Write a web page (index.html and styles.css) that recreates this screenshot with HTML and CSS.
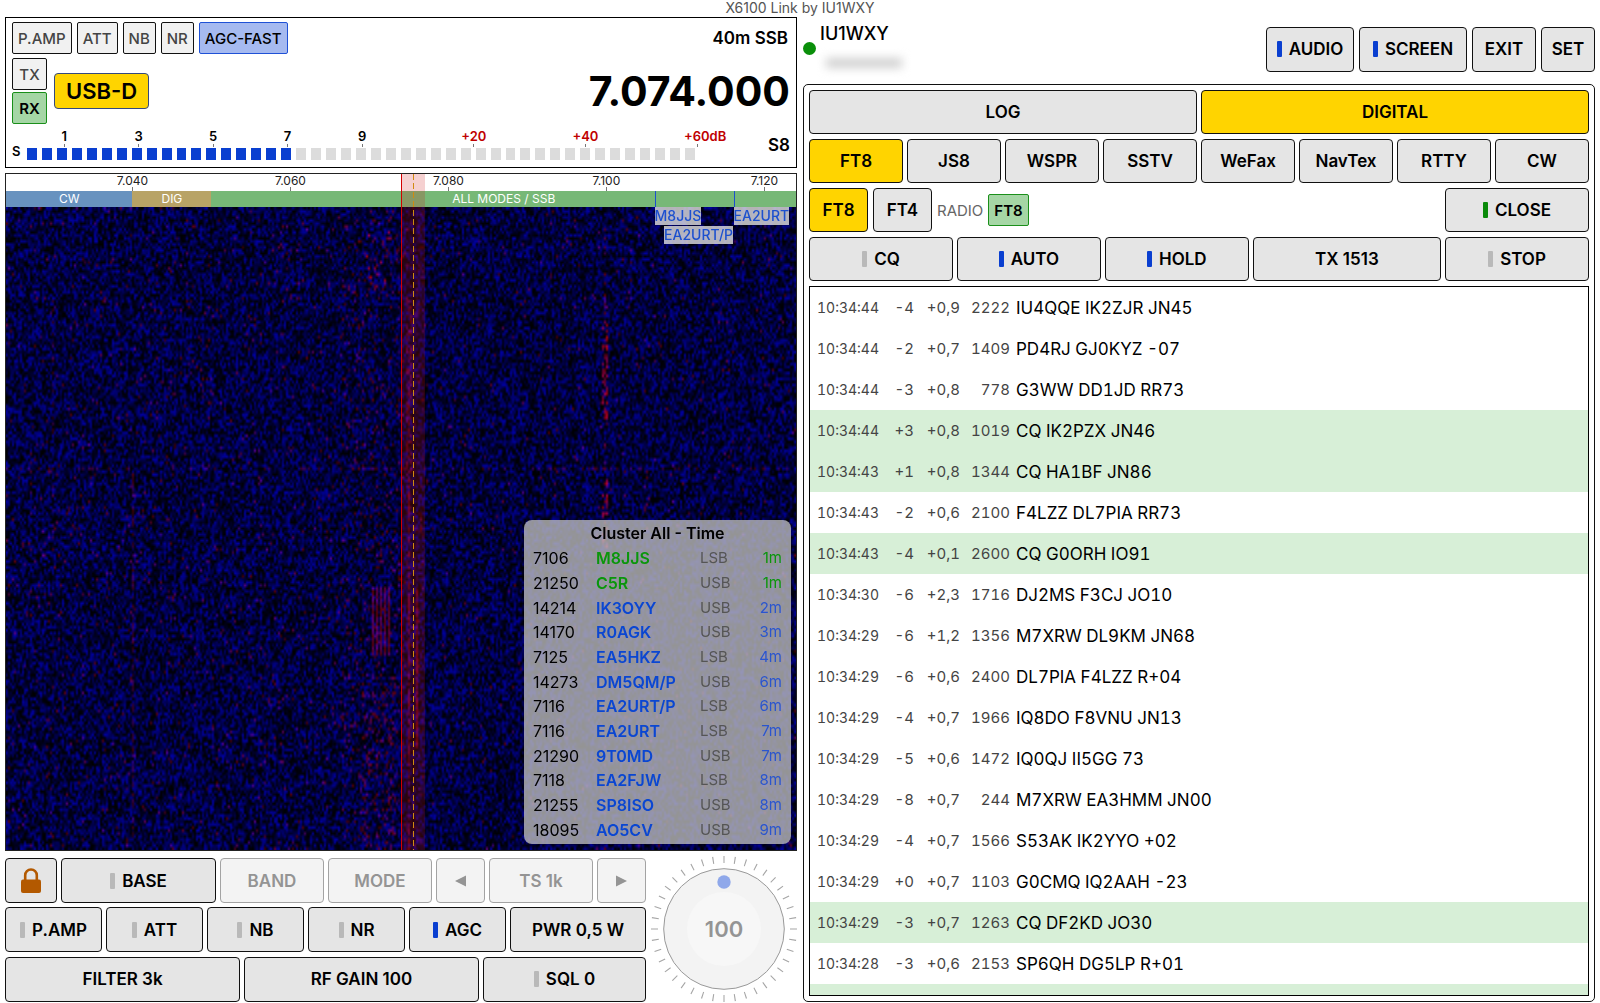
FILE: index.html
```html
<!DOCTYPE html>
<html lang="en">
<head>
<meta charset="utf-8">
<meta name="viewport" content="width=device-width, initial-scale=1">
<title>X6100 Link by IU1WXY</title>
<link rel="stylesheet" href="styles.css">
</head>
<body>
<header class="app-title">X6100 Link by IU1WXY</header>
<main class="app">
  <section class="radio">
    <div class="display">
      <div class="display-top">
        <div class="tags">
          <span class="tag">P.AMP</span><span class="tag">ATT</span><span class="tag">NB</span><span class="tag">NR</span><span class="tag tag-blue">AGC-FAST</span>
        </div>
        <span class="band">40m SSB</span>
      </div>
      <div class="display-mid">
        <div class="txrx"><span class="tag">TX</span><span class="tag tag-green">RX</span></div>
        <span class="mode">USB-D</span>
        <span class="freq">7.074.000</span>
      </div>
      <div class="smeter">
        <span class="s-name">S</span>
        <div class="s-body">
          <div class="s-scale">
            <span>1</span><span>3</span><span>5</span><span>7</span><span>9</span><i></i><span class="over">+20</span><span class="over">+40</span><span class="over last">+60dB</span>
          </div>
          <div class="s-bar" data-total="45" data-level="18"></div>
        </div>
        <span class="s-value">S8</span>
      </div>
    </div>

    <div class="spectrum">
      <div class="ruler">
        <span style="left:16%">7.040</span><span style="left:36%">7.060</span><span style="left:56%">7.080</span><span style="left:76%">7.100</span><span style="left:96%">7.120</span>
      </div>
      <div class="plan"><span class="plan-cw">CW</span><span class="plan-dig">DIG</span><span class="plan-all">ALL MODES / SSB</span></div>
      <div class="waterfall"><canvas id="waterfall" width="395" height="215"></canvas></div>
      <div class="passband"></div>
      <i class="spot-line" style="left:82.1%"></i><i class="spot-line" style="left:92.1%"></i>
      <a href="#" class="spot" style="left:82.1%">M8JJS</a>
      <a href="#" class="spot" style="left:92.1%">EA2URT</a>
      <a href="#" class="spot spot-low" style="left:83.3%">EA2URT/P</a>
      <table class="cluster">
        <caption>Cluster All - Time</caption>
        <tbody>
          <tr class="fresh"><td>7106</td><td>M8JJS</td><td>LSB</td><td>1m</td></tr>
          <tr class="fresh"><td>21250</td><td>C5R</td><td>USB</td><td>1m</td></tr>
          <tr><td>14214</td><td>IK3OYY</td><td>USB</td><td>2m</td></tr>
          <tr><td>14170</td><td>R0AGK</td><td>USB</td><td>3m</td></tr>
          <tr><td>7125</td><td>EA5HKZ</td><td>LSB</td><td>4m</td></tr>
          <tr><td>14273</td><td>DM5QM/P</td><td>USB</td><td>6m</td></tr>
          <tr><td>7116</td><td>EA2URT/P</td><td>LSB</td><td>6m</td></tr>
          <tr><td>7116</td><td>EA2URT</td><td>LSB</td><td>7m</td></tr>
          <tr><td>21290</td><td>9T0MD</td><td>USB</td><td>7m</td></tr>
          <tr><td>7118</td><td>EA2FJW</td><td>LSB</td><td>8m</td></tr>
          <tr><td>21255</td><td>SP8ISO</td><td>USB</td><td>8m</td></tr>
          <tr><td>18095</td><td>AO5CV</td><td>USB</td><td>9m</td></tr>
        </tbody>
      </table>
    </div>

    <div class="controls">
      <div class="pad">
        <div class="row row-a">
          <button aria-label="Lock"><svg class="lock" viewBox="0 0 20 26" width="20" height="26"><path d="M4.2 12V7.3a5.8 5.8 0 0 1 11.6 0V12" fill="none" stroke="#b35900" stroke-width="2.6"/><rect x="0" y="11.5" width="20" height="13.5" rx="2" fill="#b35900"/></svg></button>
          <button><i class="led"></i>BASE</button>
          <button disabled>BAND</button>
          <button disabled>MODE</button>
          <button disabled aria-label="Step down"><svg viewBox="0 0 11 12" width="11" height="12"><path d="M0 6 11 .5v11z" fill="currentColor"/></svg></button>
          <button disabled>TS 1k</button>
          <button disabled aria-label="Step up"><svg viewBox="0 0 11 12" width="11" height="12"><path d="M11 6 0 .5v11z" fill="currentColor"/></svg></button>
        </div>
        <div class="row row-b">
          <button><i class="led"></i>P.AMP</button>
          <button><i class="led"></i>ATT</button>
          <button><i class="led"></i>NB</button>
          <button><i class="led"></i>NR</button>
          <button><i class="led on"></i>AGC</button>
          <button>PWR 0,5 W</button>
        </div>
        <div class="row row-c">
          <button>FILTER 3k</button>
          <button>RF GAIN 100</button>
          <button><i class="led"></i>SQL 0</button>
        </div>
      </div>
      <div class="knob">
        <svg viewBox="0 0 148 148" width="148" height="148" aria-hidden="true">
          <circle cx="74" cy="74" r="69.5" fill="none" stroke="#a6a6a6" stroke-width="7" pathLength="400" stroke-dasharray="1 9" stroke-dashoffset=".5"/>
          <circle cx="74" cy="74" r="60.3" fill="#f3f3f3" stroke="#999" stroke-width="1"/>
          <circle cx="74" cy="74" r="37" fill="#f7f7f7"/>
          <circle cx="74" cy="27" r="6.7" fill="#8fa8ea"/>
        </svg>
        <span class="knob-value">100</span>
      </div>
    </div>
  </section>

  <section class="side">
    <div class="station">
      <i class="online"></i>
      <div class="who"><span class="call">IU1WXY</span><span class="address"></span></div>
      <div class="actions">
        <button class="w-audio"><i class="led on"></i>AUDIO</button>
        <button class="w-screen"><i class="led on"></i>SCREEN</button>
        <button class="w-exit">EXIT</button>
        <button class="w-set">SET</button>
      </div>
    </div>
    <div class="digital">
      <div class="row row-2"><button>LOG</button><button class="active">DIGITAL</button></div>
      <div class="row row-8"><button class="active">FT8</button><button>JS8</button><button>WSPR</button><button>SSTV</button><button>WeFax</button><button>NavTex</button><button>RTTY</button><button>CW</button></div>
      <div class="row submode">
        <button class="active">FT8</button><button>FT4</button>
        <span class="hint">RADIO</span><span class="tag tag-green">FT8</span>
        <button class="close"><i class="led ok"></i>CLOSE</button>
      </div>
      <div class="row row-5"><button><i class="led"></i>CQ</button><button><i class="led on"></i>AUTO</button><button><i class="led on"></i>HOLD</button><button>TX 1513</button><button><i class="led"></i>STOP</button></div>
      <div class="log">
        <table class="messages">
          <tbody>
            <tr><td>10:34:44</td><td>-4</td><td>+0,9</td><td>2222</td><td>IU4QQE IK2ZJR JN45</td></tr>
            <tr><td>10:34:44</td><td>-2</td><td>+0,7</td><td>1409</td><td>PD4RJ GJ0KYZ -07</td></tr>
            <tr><td>10:34:44</td><td>-3</td><td>+0,8</td><td>778</td><td>G3WW DD1JD RR73</td></tr>
            <tr class="cq"><td>10:34:44</td><td>+3</td><td>+0,8</td><td>1019</td><td>CQ IK2PZX JN46</td></tr>
            <tr class="cq"><td>10:34:43</td><td>+1</td><td>+0,8</td><td>1344</td><td>CQ HA1BF JN86</td></tr>
            <tr><td>10:34:43</td><td>-2</td><td>+0,6</td><td>2100</td><td>F4LZZ DL7PIA RR73</td></tr>
            <tr class="cq"><td>10:34:43</td><td>-4</td><td>+0,1</td><td>2600</td><td>CQ G0ORH IO91</td></tr>
            <tr><td>10:34:30</td><td>-6</td><td>+2,3</td><td>1716</td><td>DJ2MS F3CJ JO10</td></tr>
            <tr><td>10:34:29</td><td>-6</td><td>+1,2</td><td>1356</td><td>M7XRW DL9KM JN68</td></tr>
            <tr><td>10:34:29</td><td>-6</td><td>+0,6</td><td>2400</td><td>DL7PIA F4LZZ R+04</td></tr>
            <tr><td>10:34:29</td><td>-4</td><td>+0,7</td><td>1966</td><td>IQ8DO F8VNU JN13</td></tr>
            <tr><td>10:34:29</td><td>-5</td><td>+0,6</td><td>1472</td><td>IQ0QJ II5GG 73</td></tr>
            <tr><td>10:34:29</td><td>-8</td><td>+0,7</td><td>244</td><td>M7XRW EA3HMM JN00</td></tr>
            <tr><td>10:34:29</td><td>-4</td><td>+0,7</td><td>1566</td><td>S53AK IK2YYO +02</td></tr>
            <tr><td>10:34:29</td><td>+0</td><td>+0,7</td><td>1103</td><td>G0CMQ IQ2AAH -23</td></tr>
            <tr class="cq"><td>10:34:29</td><td>-3</td><td>+0,7</td><td>1263</td><td>CQ DF2KD JO30</td></tr>
            <tr><td>10:34:28</td><td>-3</td><td>+0,6</td><td>2153</td><td>SP6QH DG5LP R+01</td></tr>
            <tr class="cq"><td></td><td></td><td></td><td></td><td></td></tr>
          </tbody>
        </table>
      </div>
    </div>
  </section>
</main>
<script src="app.js"></script>
</body>
</html>
```
FILE: styles.css
```css
* { box-sizing: border-box; }

body {
  margin: 0;
  height: 100vh;
  padding: 0 5px 1px;
  display: flex;
  flex-direction: column;
  background: #fff;
  color: #000;
  font-family: Inter, "Noto Sans", sans-serif;
  font-size: 16px;
}

.app-title {
  height: 17px;
  line-height: 16px;
  font-size: 14px;
  color: #555;
  text-align: center;
  flex: none;
}

.app {
  flex: 1;
  min-height: 0;
  display: grid;
  grid-template-columns: minmax(0, 1fr) minmax(0, 1fr);
  gap: 6px;
}

/* Buttons and tags */
button {
  min-width: 0;
  height: 45px;
  padding: 0;
  display: flex;
  align-items: center;
  justify-content: center;
  border: 1px solid #111;
  border-radius: 4px;
  background: #e5e5e5;
  color: #000;
  font: 600 17px Inter, "Noto Sans", sans-serif;
  white-space: nowrap;
}
button.active { background: #ffd400; }
button:disabled { background: #f3f3f3; border-color: #a3a3a3; color: #949494; }

.led { width: 5px; height: 16px; margin-right: 7px; border-radius: 1px; background: #b9b9b9; }
.led.on { background: #0a3fd0; }
.led.ok { background: #0a8a0a; }

.tag {
  height: 32px;
  padding: 0 5px;
  display: flex;
  align-items: center;
  justify-content: center;
  border: 1px solid #111;
  border-radius: 2px;
  background: #f1f1f1;
  color: #444;
  font-size: 15px;
  font-weight: 500;
}
.tag-blue { background: #a6baf0; border-color: #1f51d6; color: #000; }
.tag-green { background: #a5d6a5; border-color: #1a8f1a; color: #000; font-weight: 600; }

/* Left half */
.radio { display: flex; flex-direction: column; min-height: 0; }

.display {
  height: 151px;
  flex: none;
  padding: 4px 6px 0;
  border: 1px solid #000;
  display: flex;
  flex-direction: column;
}
.display-top { display: flex; justify-content: space-between; }
.tags { display: flex; gap: 5px; }
.band { padding-right: 2px; line-height: 32px; font-size: 17px; font-weight: 600; }
.display-mid { margin-top: 4px; display: flex; align-items: center; }
.txrx { width: 35px; display: flex; flex-direction: column; gap: 2px; }
.mode {
  height: 36px;
  margin-left: 7px;
  padding: 0 11px;
  border: 1px solid #34497f;
  border-radius: 4px;
  background: #ffd400;
  font-size: 22px;
  font-weight: 600;
  line-height: 34px;
}
.freq { margin-left: auto; font-size: 41px; font-weight: 700; line-height: 50px; }

.smeter { display: flex; }
.s-name { width: 15px; padding-top: 17px; font-size: 13px; font-weight: 600; line-height: 20px; }
.s-body { flex: 1; padding-top: 4px; }
.s-scale { display: grid; grid-template-columns: repeat(5, 20fr) 5fr repeat(3, 30fr); height: 19px; }
.s-scale span {
  font-size: 13px;
  font-weight: 600;
  line-height: 16px;
  text-align: center;
  background: linear-gradient(#777, #777) center bottom / 1px 3px no-repeat;
}
.s-scale .over { color: #c00000; }
.s-scale .last { text-indent: 16px; }
.s-bar { width: 92%; height: 12px; margin-top: 1px; display: flex; gap: 5px; }
.s-bar i { flex: 1; background: #dcdcdc; }
.s-bar .lit { background: #0a3fd0; }
.s-value { width: 37px; padding-top: 10px; font-size: 17px; font-weight: 600; line-height: 22px; text-align: right; }

.spectrum {
  position: relative;
  flex: 1;
  min-height: 0;
  margin-top: 5px;
  border: 1px solid #222;
  overflow: hidden;
  display: flex;
  flex-direction: column;
}
.ruler { position: relative; height: 17px; flex: none; }
.ruler span {
  position: absolute;
  width: 60px;
  height: 17px;
  margin-left: -30px;
  text-align: center;
  font-size: 12px;
  line-height: 13px;
  color: #222;
  background: linear-gradient(#777, #777) center bottom / 1px 4px no-repeat;
}
.plan { display: grid; grid-template-columns: 16fr 10fr 74fr; height: 16px; flex: none; }
.plan span { color: #fff; font-size: 12px; line-height: 16px; text-align: center; }
.plan-cw { background: #6892bf; }
.plan-dig { background: #b8a366; }
.plan-all { background: #77b877; }
.waterfall { flex: 1; min-height: 0; background: #000038; }
.waterfall canvas { display: block; width: 100%; height: 100%; }
.passband {
  position: absolute;
  top: 0;
  bottom: 0;
  left: 50%;
  width: 3%;
  border-left: 1px solid #d40000;
  background: rgba(205, 20, 20, .2);
}
.passband::after {
  content: "";
  position: absolute;
  top: 0;
  bottom: 0;
  left: 11px;
  width: 1px;
  background: repeating-linear-gradient(#d08a10 0 6px, transparent 6px 9px);
}
.spot-line { position: absolute; top: 17px; width: 1px; height: 16px; background: #1c50cf; }
.spot {
  position: absolute;
  top: 33px;
  background: rgba(225, 225, 225, .8);
  color: #1c50cf;
  font-size: 14px;
  font-weight: 500;
  line-height: 18px;
  text-decoration: none;
}
.spot-low { top: 52px; }

.cluster {
  position: absolute;
  right: 5px;
  bottom: 6px;
  display: block;
  width: 267px;
  height: 324px;
  padding: 0 9px 2px;
  border-radius: 8px;
  background: rgba(190, 190, 190, .78);
}
.cluster caption { display: block; height: 26px; line-height: 27px; font-size: 16px; font-weight: 600; }
.cluster tbody { display: flex; flex-direction: column; height: 296px; }
.cluster tr { flex: 1; display: grid; grid-template-columns: 63px 104px 1fr auto; align-items: center; }
.cluster td { padding: 0; font-size: 16px; line-height: 20px; }
.cluster td:nth-child(2) { color: #0a46d2; font-weight: 600; }
.cluster td:nth-child(3) { color: #555; font-size: 15px; }
.cluster td:nth-child(4) { color: #2a55cf; font-size: 15px; }
.cluster .fresh td:nth-child(2), .cluster .fresh td:nth-child(4) { color: #0a960a; }

.controls { display: flex; flex: none; height: 151px; }
.pad { flex: 1; display: grid; gap: 4px; padding-top: 7px; }
.row { display: grid; gap: 4px; }
.row-a { grid-template-columns: 52fr 155fr 104fr 104fr 49fr 104fr 49fr; }
.row-b { grid-template-columns: repeat(5, 97fr) 136fr; }
.row-c { grid-template-columns: 235fr 235fr 163fr; }
.knob { width: 151px; display: grid; place-items: center; align-content: center; padding: 4px 0 0 4px; }
.knob svg, .knob-value { grid-area: 1 / 1; }
.knob-value { position: relative; color: #949494; font-size: 22px; font-weight: 600; }

/* Right half */
.side { display: flex; flex-direction: column; min-height: 0; }
.station { height: 67px; flex: none; display: flex; align-items: center; }
.online { width: 13px; height: 13px; margin: 0 4px 4px 0; border-radius: 50%; background: #0a8f0a; }
.who { display: flex; flex-direction: column; align-self: flex-start; padding-top: 5px; }
.call { font-size: 18px; font-weight: 500; line-height: 24px; }
.address { width: 76px; height: 10px; margin: 12px 0 0 6px; background: #d0d0d0; filter: blur(5px); }
.actions { display: flex; gap: 5px; margin: 0 0 3px auto; }
.w-audio { width: 88px; }
.w-screen { width: 108px; }
.w-exit { width: 64px; }
.w-set { width: 54px; }

.digital {
  flex: 1;
  min-height: 0;
  padding: 5px;
  border: 1px solid #111;
  border-radius: 5px;
  display: flex;
  flex-direction: column;
  gap: 5px;
}
.digital button { height: 44px; }
.row-2 { grid-template-columns: 1fr 1fr; }
.row-8 { grid-template-columns: repeat(8, 1fr); }
.row-5 { grid-template-columns: 143fr 143fr 143fr 187fr 143fr; }
.submode { grid-template-columns: 59px 59px auto auto 1fr; gap: 5px; align-items: center; }
.hint { font-size: 15px; color: #666; }
.submode .close { width: 144px; justify-self: end; }
.log { flex: 1; min-height: 0; border: 1px solid #000; overflow: hidden; }
.messages { width: 100%; border-spacing: 0; table-layout: fixed; font-variant-numeric: tabular-nums; }
.messages td { height: 41px; padding: 0; text-align: right; color: #444; font-size: 15px; white-space: nowrap; }
.messages td:nth-child(1) { width: 73px; padding-left: 7px; text-align: left; font-size: 14px; }
.messages td:nth-child(2) { width: 31px; }
.messages td:nth-child(3) { width: 46px; }
.messages td:nth-child(4) { width: 50px; }
.messages td:nth-child(5) { padding-left: 6px; text-align: left; color: #000; font-size: 17px; }
.messages .cq { background: #d7efd7; }
```
FILE: app.js
```js
// S-meter segments
document.querySelectorAll('.s-bar').forEach(function (bar) {
  for (let n = 0; n < +bar.dataset.total; n++) {
    const seg = document.createElement('i');
    if (n < +bar.dataset.level) seg.className = 'lit';
    bar.appendChild(seg);
  }
});

// Waterfall: seeded noise floor plus signal traces
(function () {
  const canvas = document.getElementById('waterfall');
  const ctx = canvas.getContext('2d');
  const w = canvas.width, h = canvas.height;
  let seed = 7074;
  function rnd() {
    seed = (seed * 1664525 + 1013904223) >>> 0;
    return seed / 4294967296;
  }
  // x centre, half width, y start, y end, red probability, red level
  const traces = [
    [182, 14, 0, 215, 0.05, 100],
    [186, 6, 8, 26, 0.08, 190],
    [204, 4, 0, 215, 0.2, 45],
    [201, 1, 30, 90, 0.5, 100],
    [201, 0, 90, 215, 0.7, 120],
    [205, 0, 128, 180, 1, 140],
    [299, 0, 0, 215, 0.25, 110],
    [299, 1, 38, 70, 0.35, 180],
    [299, 1, 88, 116, 0.35, 180],
    [186, 8, 156, 215, 0.14, 105],
    [63, 0, 90, 210, 0.7, 70],
    [23, 0, 20, 110, 0.3, 60]
  ];
  const img = ctx.createImageData(w, h);
  for (let y = 0; y < h; y++) {
    for (let x = 0; x < w; x++) {
      const i = (y * w + x) * 4;
      const p = 0.012 + (x < 200 ? 0.012 : 0);
      let b = Math.pow(rnd(), 1.6) * 165;
      let r = rnd() < p ? 50 + rnd() * 50 : 0;
      traces.forEach(function (t) {
        if (Math.abs(x - t[0]) <= t[1] && y >= t[2] && y <= t[3] && rnd() < t[4]) {
          r = Math.max(r, t[5] * (0.4 + 0.6 * rnd()));
        }
      });
      if (y > 126 && y < 150 && x > 182 && x < 193 && x % 2) r = Math.max(r, 95);
      if (y === 87 && rnd() < 0.15) r = Math.max(r, 55);
      if (r > 95) b = Math.min(b, 70);
      img.data[i] = r;
      img.data[i + 2] = b;
      img.data[i + 3] = 255;
    }
  }
  ctx.putImageData(img, 0, 0);
})();
```
